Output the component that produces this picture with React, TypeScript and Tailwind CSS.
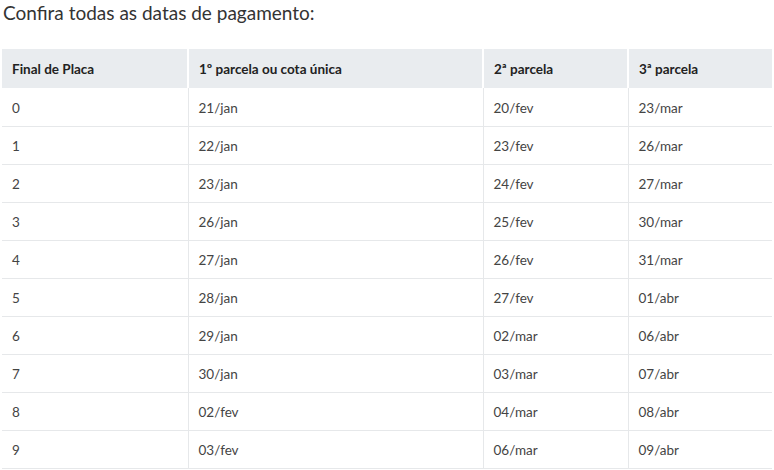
const rows: [string, string, string, string][] = [
  ['0', '21/jan', '20/fev', '23/mar'],
  ['1', '22/jan', '23/fev', '26/mar'],
  ['2', '23/jan', '24/fev', '27/mar'],
  ['3', '26/jan', '25/fev', '30/mar'],
  ['4', '27/jan', '26/fev', '31/mar'],
  ['5', '28/jan', '27/fev', '01/abr'],
  ['6', '29/jan', '02/mar', '06/abr'],
  ['7', '30/jan', '03/mar', '07/abr'],
  ['8', '02/fev', '04/mar', '08/abr'],
  ['9', '03/fev', '06/mar', '09/abr'],
];

export default function App() {
  return (
    <div className="w-[774px] h-[470px] bg-white overflow-hidden font-['Lato','Liberation_Sans',sans-serif] text-[#333]">
      {/* Title */}
      <h2 className="h-[49px] pl-[3px] text-[19px] leading-[26px] font-normal text-[#333]">
        Confira todas as datas de pagamento:
      </h2>

      {/* Table */}
      <table className="ml-[2px] w-[770px] border-collapse table-fixed text-[13.5px]">
        <colgroup>
          <col className="w-[186px]" />
          <col className="w-[295px]" />
          <col className="w-[145px]" />
          <col className="w-[144px]" />
        </colgroup>
        <thead>
          <tr className="h-[39px] bg-[#e9ecef]">
            <th className="pl-[10px] pt-[2px] text-left font-bold text-[#222] border-r-2 border-white">Final de Placa</th>
            <th className="pl-[10px] pt-[2px] text-left font-bold text-[#222] border-r-2 border-white">1º parcela ou cota única</th>
            <th className="pl-[10px] pt-[2px] text-left font-bold text-[#222] border-r-2 border-white">2ª parcela</th>
            <th className="pl-[10px] pt-[2px] text-left font-bold text-[#222]">3ª parcela</th>
          </tr>
        </thead>
        <tbody>
          {rows.map((r) => (
            <tr key={r[0]} className="h-[38px] border-b border-[#e6e8ea]">
              {r.map((cell, i) => (
                <td
                  key={i}
                  className={`pl-[10px] pt-[2px] text-[#444] ${i < 3 ? 'border-r border-[#e6e8ea]' : ''}`}
                >
                  {cell}
                </td>
              ))}
            </tr>
          ))}
        </tbody>
      </table>
    </div>
  );
}
